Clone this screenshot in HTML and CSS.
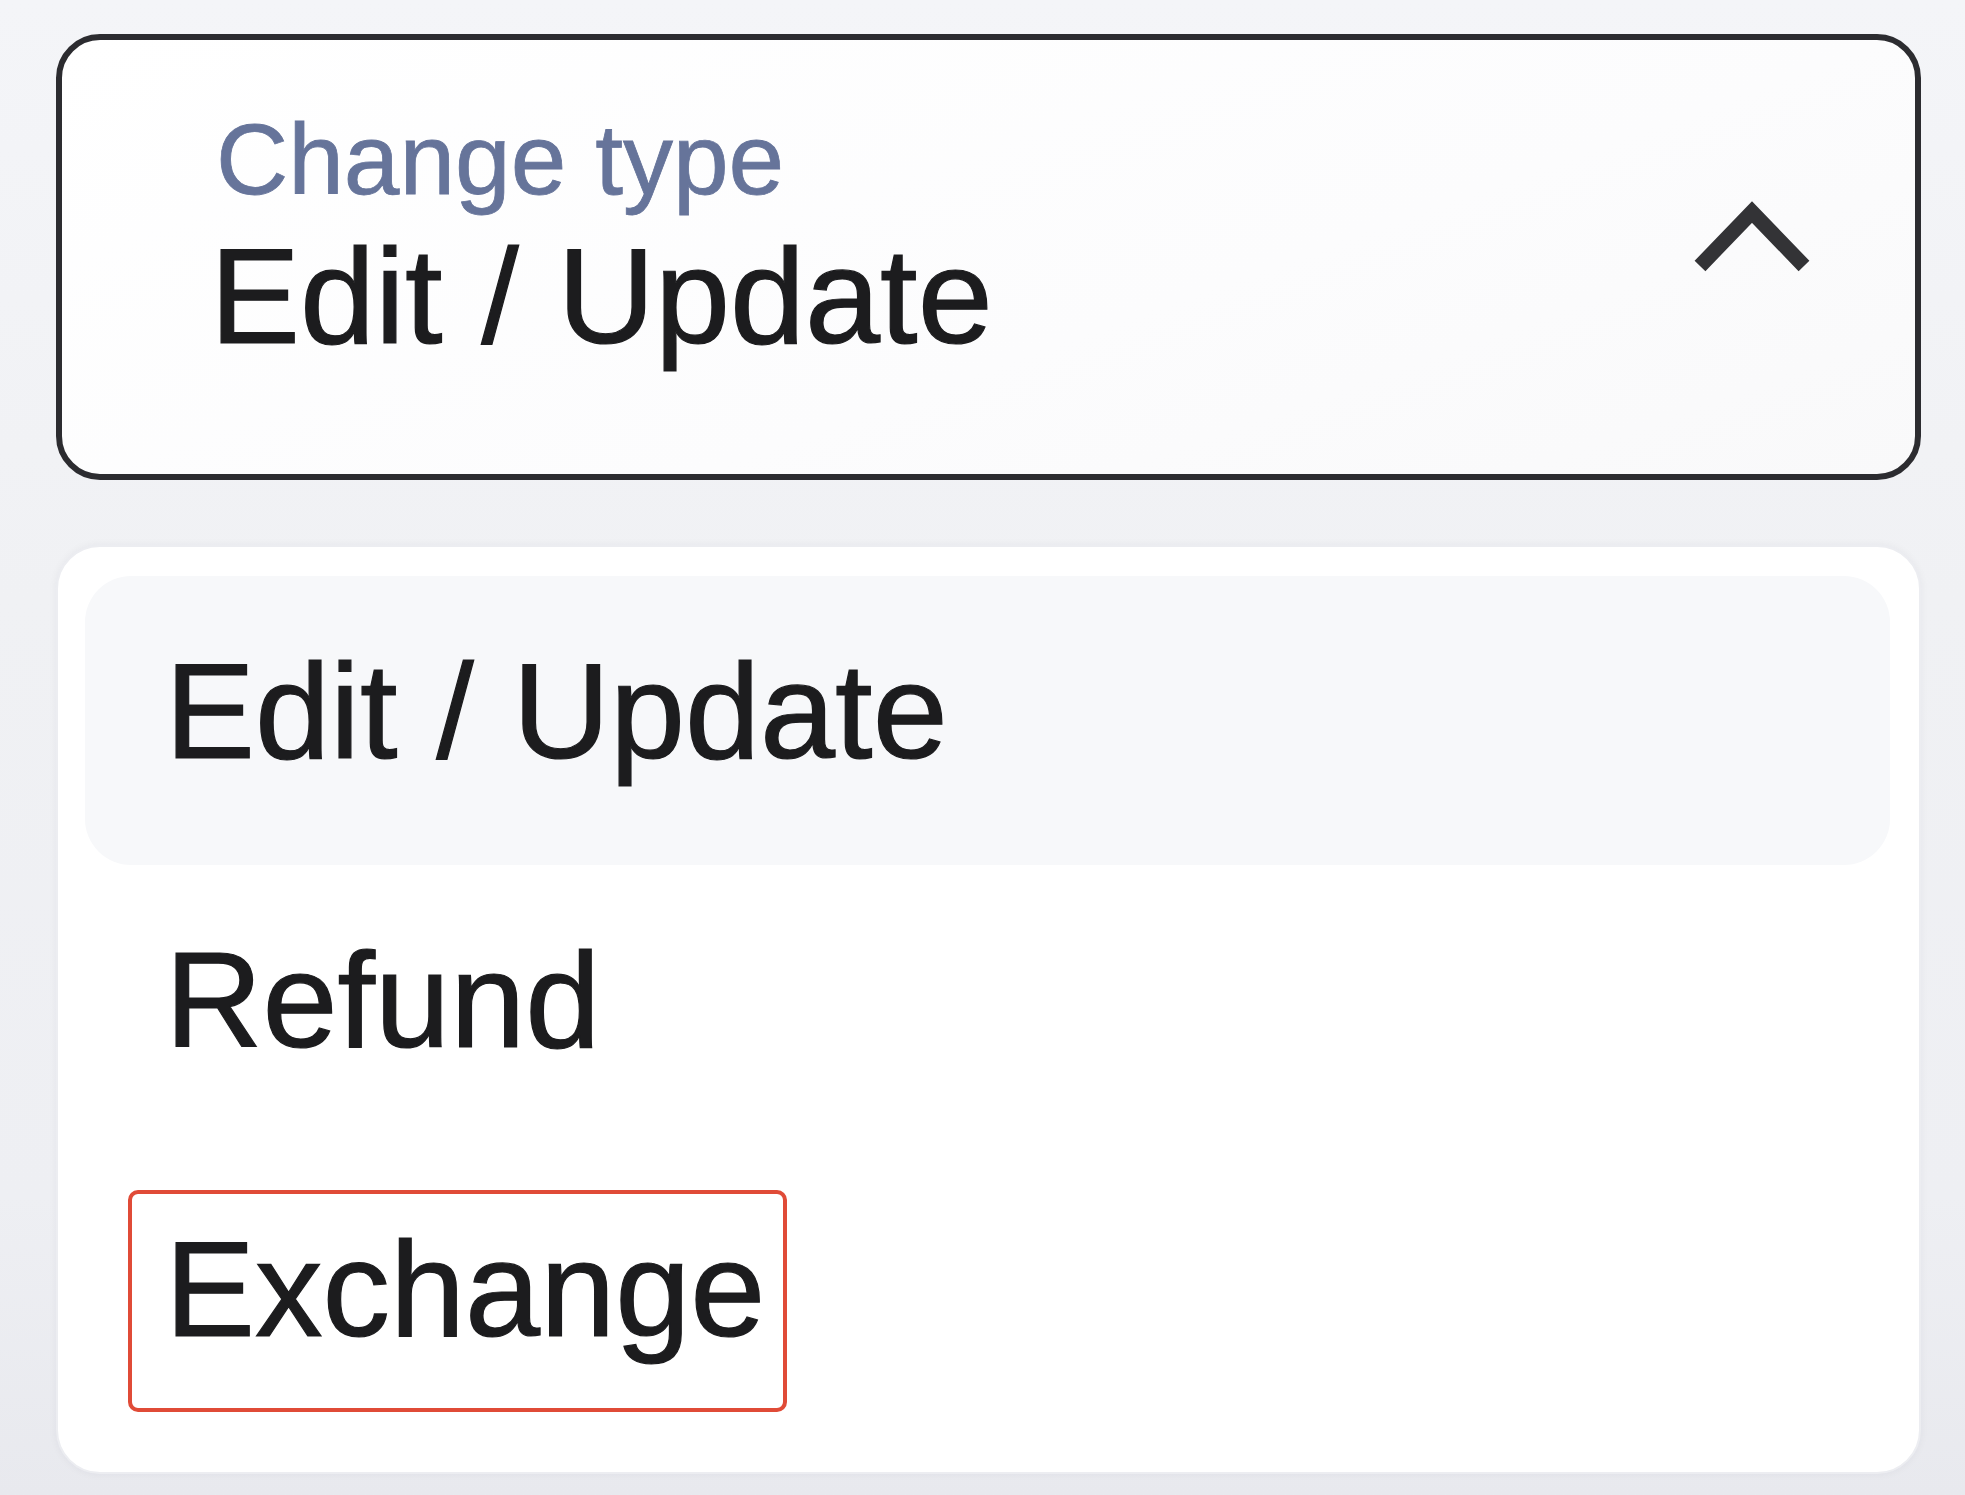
FILE: index.html
```html
<!DOCTYPE html>
<html lang="en">
<head>
<meta charset="utf-8">
<title>Change type</title>
<link rel="stylesheet" href="styles.css">
</head>
<body>
<div class="page">
  <div class="select">
    <div class="select-text">
      <div class="select-label">Change type</div>
      <div class="select-value">Edit / Update</div>
    </div>
    <svg class="chevron" width="120" height="80" viewBox="0 0 120 80" aria-hidden="true">
      <polyline points="8,68 60,14 112,68" fill="none" stroke="#333336" stroke-width="15" stroke-linejoin="miter" stroke-linecap="butt"/>
    </svg>
  </div>
  <div class="menu">
    <div class="option option-active">Edit / Update</div>
    <div class="option">Refund</div>
    <div class="option option-marked"><span>Exchange</span><div class="mark"></div></div>
  </div>
</div>
</body>
</html>
```
FILE: styles.css
```css
html, body {
  margin: 0;
  padding: 0;
}
body {
  width: 1965px;
  height: 1495px;
  overflow: hidden;
  background: linear-gradient(180deg, #f4f5f8 0%, #f0f1f4 40%, #eeeff3 80%, #e8e9ee 100%);
  font-family: "Liberation Sans", Arial, sans-serif;
  color: #1c1c1e;
  word-spacing: 0.07em;
}
.page {
  padding: 34px 44px 0 56px;
}
.select {
  box-sizing: border-box;
  width: 1865px;
  height: 446px;
  border: 6px solid #2c2c30;
  border-radius: 44px;
  background: linear-gradient(160deg, #ffffff 0%, #fcfcfd 60%, #f9f9fa 100%);
  display: flex;
  align-items: flex-start;
  padding-left: 148px;
}
.select-text {
  padding-top: 59px;
  display: flex;
  flex-direction: column;
}
.select-label {
  font-size: 100px;
  line-height: 120px;
  margin-left: 6px;
  color: #66749a;
  -webkit-text-stroke: 0.8px #66749a;
}
.select-value {
  font-size: 135px;
  line-height: 156px;
  color: #1c1c1e;
  -webkit-text-stroke: 1.2px #1c1c1e;
}
.chevron {
  margin-left: auto;
  margin-top: 158px;
  margin-right: 103px;
  flex: none;
}
.menu {
  box-sizing: border-box;
  margin-top: 65px;
  width: 1865px;
  height: 929px;
  border: 2px solid #ecedf1;
  border-radius: 44px;
  background: #ffffff;
  box-shadow: 0 0 8px rgba(30, 35, 60, 0.05);
  padding: 29px 29px 29px 27px;
  display: flex;
  flex-direction: column;
}
.option {
  box-sizing: border-box;
  height: 289px;
  border-radius: 46px;
  display: flex;
  align-items: center;
  padding-left: 80px;
  padding-bottom: 17px;
  font-size: 135px;
  line-height: 156px;
  color: #1c1c1e;
  -webkit-text-stroke: 1.2px #1c1c1e;
}
.option-active {
  background: #f7f8fa;
}
.option-marked {
  position: relative;
}
.mark {
  position: absolute;
  left: 43px;
  top: 36px;
  width: 659px;
  height: 222px;
  box-sizing: border-box;
  border: 4px solid #e04b37;
  border-radius: 10px;
}
```
